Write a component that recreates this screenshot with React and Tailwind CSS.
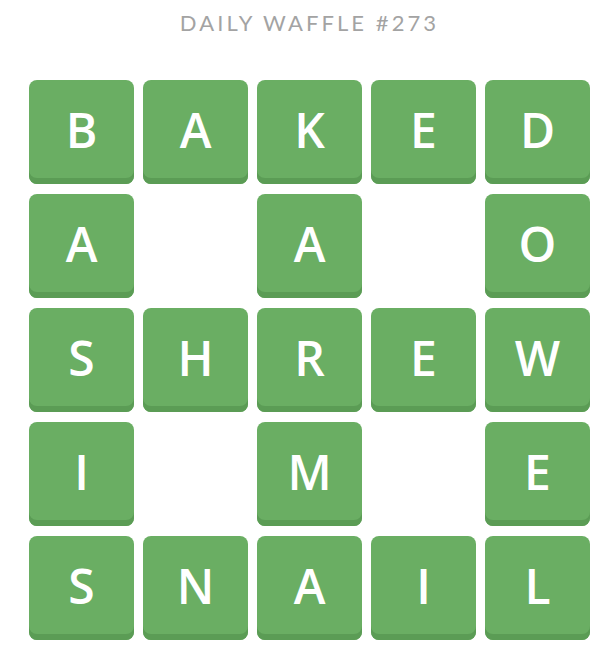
import React from "react";

const rows = ["BAKED", "A A O", "SHREW", "I M E", "SNAIL"];

export default function App() {
  return (
    <div className="w-[605px] h-[652px] bg-white overflow-hidden" style={{ fontFamily: '"Open Sans", "Noto Sans", sans-serif' }}>
      <div className="pl-[29px] pt-[8px]">
        <div className="w-[561px] text-center text-[22px] leading-[30px] tracking-[0.14em] text-[#a3a3a3]" style={{ fontFamily: 'Lato, "Open Sans", sans-serif' }}>
          DAILY WAFFLE #273
        </div>
        <div className="mt-[42px] grid grid-cols-[repeat(5,105px)] gap-x-[9px] gap-y-[10px]">
          {rows.flatMap((row, r) =>
            row.split("").map((ch, c) =>
              ch === " " ? (
                <div key={`${r}-${c}`} className="h-[104px]" />
              ) : (
                <div
                  key={`${r}-${c}`}
                  className="h-[104px] rounded-[8px] bg-[#6aae63] shadow-[inset_0_-6px_0_#5b9c55] flex items-center justify-center pb-[4px] text-white text-[48px] font-semibold"
                >
                  {ch}
                </div>
              )
            )
          )}
        </div>
      </div>
    </div>
  );
}
